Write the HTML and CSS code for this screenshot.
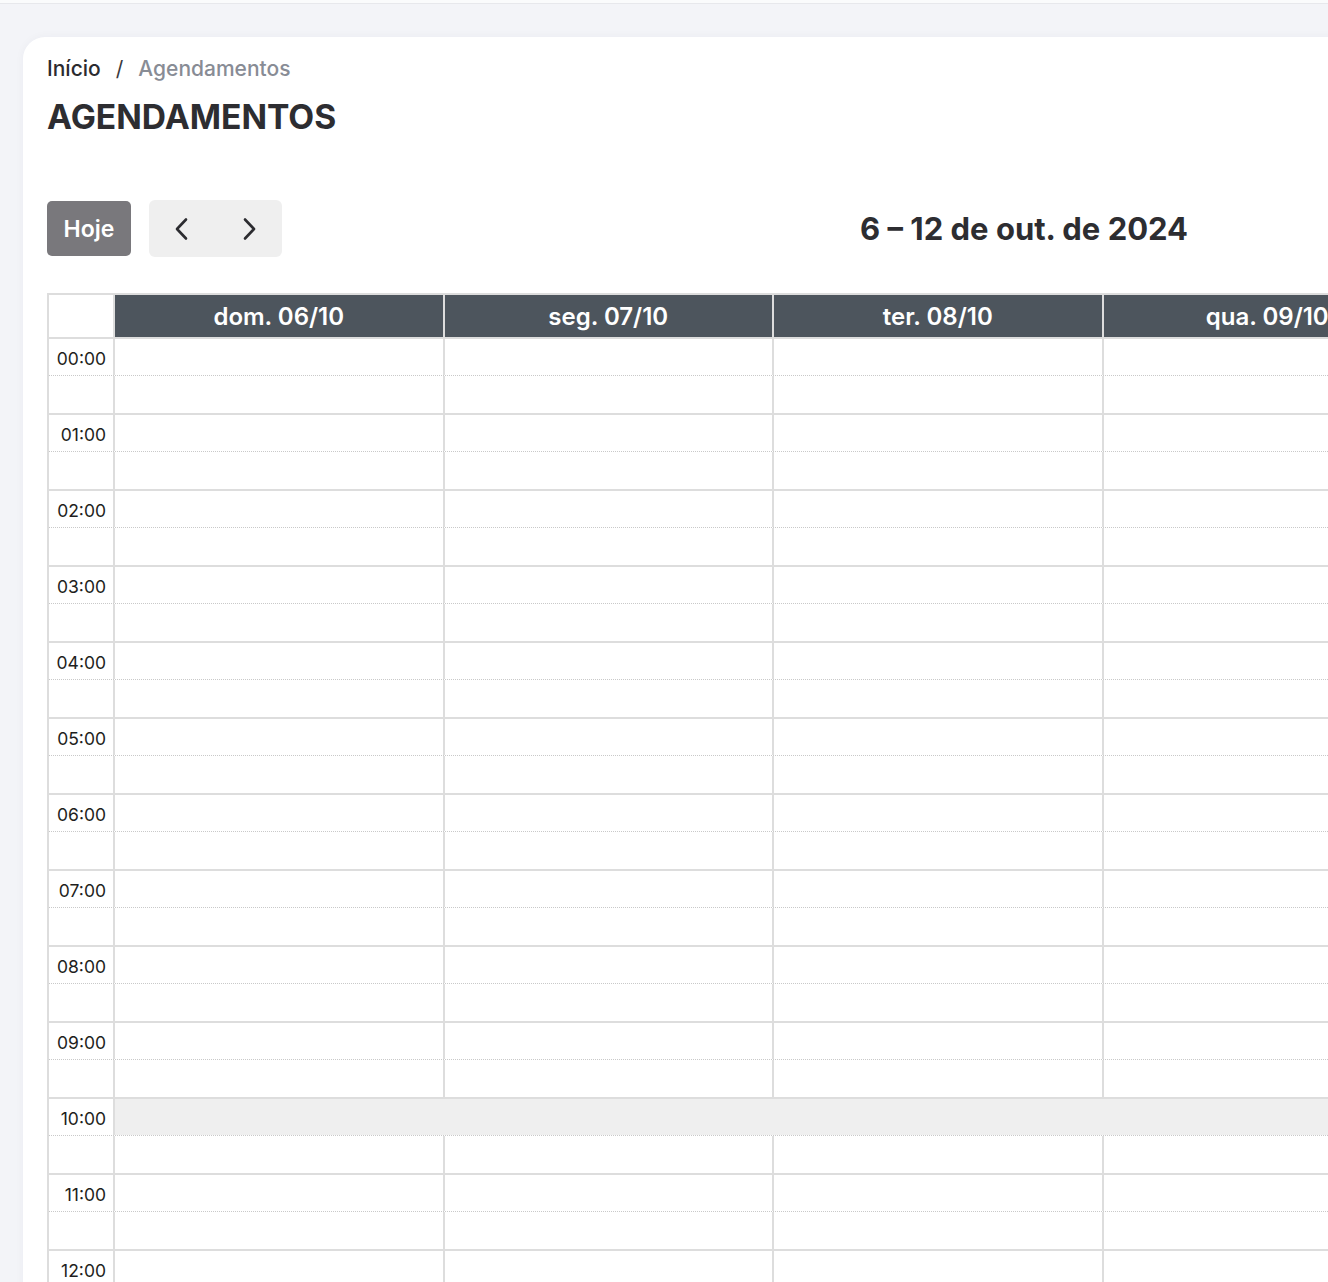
FILE: index.html
```html
<!DOCTYPE html>
<html lang="pt-BR">
<head>
<meta charset="utf-8">
<title>Agendamentos</title>
<link rel="stylesheet" href="styles.css">
</head>
<body>
<div class="topbar"></div>
<main class="main">
  <section class="card">
    <nav class="breadcrumb">
      <span class="crumb">Início</span>
      <span class="sep">/</span>
      <span class="crumb current">Agendamentos</span>
    </nav>
    <h1 class="page-title">AGENDAMENTOS</h1>

    <div class="toolbar">
      <div class="toolbar-left">
        <button class="btn-today">Hoje</button>
        <div class="nav-group">
          <button class="nav-btn" aria-label="Anterior">
            <svg width="20" height="26" viewBox="0 0 20 26"><path d="M14 3.5 L5 13 L14 22.5" fill="none" stroke="#2c2c30" stroke-width="2.6" stroke-linecap="round" stroke-linejoin="round"/></svg>
          </button>
          <button class="nav-btn" aria-label="Próximo">
            <svg width="20" height="26" viewBox="0 0 20 26"><path d="M6 3.5 L15 13 L6 22.5" fill="none" stroke="#2c2c30" stroke-width="2.6" stroke-linecap="round" stroke-linejoin="round"/></svg>
          </button>
        </div>
      </div>
      <h2 class="range-title">6 – 12 de out. de 2024</h2>
    </div>

    <div class="cal">
      <div class="cal-head">
        <div class="axis-head"></div>
        <div class="day-head">dom. 06/10</div>
        <div class="day-head">seg. 07/10</div>
        <div class="day-head">ter. 08/10</div>
        <div class="day-head">qua. 09/10</div>
        <div class="day-head">qui. 10/10</div>
        <div class="day-head">sex. 11/10</div>
        <div class="day-head">sáb. 12/10</div>
      </div>

      <div class="slot hour"><div class="time">00:00</div><div class="lane"></div><div class="lane"></div><div class="lane"></div><div class="lane"></div><div class="lane"></div><div class="lane"></div><div class="lane"></div></div>
      <div class="slot half"><div class="time"></div><div class="lane"></div><div class="lane"></div><div class="lane"></div><div class="lane"></div><div class="lane"></div><div class="lane"></div><div class="lane"></div></div>
      <div class="slot hour"><div class="time">01:00</div><div class="lane"></div><div class="lane"></div><div class="lane"></div><div class="lane"></div><div class="lane"></div><div class="lane"></div><div class="lane"></div></div>
      <div class="slot half"><div class="time"></div><div class="lane"></div><div class="lane"></div><div class="lane"></div><div class="lane"></div><div class="lane"></div><div class="lane"></div><div class="lane"></div></div>
      <div class="slot hour"><div class="time">02:00</div><div class="lane"></div><div class="lane"></div><div class="lane"></div><div class="lane"></div><div class="lane"></div><div class="lane"></div><div class="lane"></div></div>
      <div class="slot half"><div class="time"></div><div class="lane"></div><div class="lane"></div><div class="lane"></div><div class="lane"></div><div class="lane"></div><div class="lane"></div><div class="lane"></div></div>
      <div class="slot hour"><div class="time">03:00</div><div class="lane"></div><div class="lane"></div><div class="lane"></div><div class="lane"></div><div class="lane"></div><div class="lane"></div><div class="lane"></div></div>
      <div class="slot half"><div class="time"></div><div class="lane"></div><div class="lane"></div><div class="lane"></div><div class="lane"></div><div class="lane"></div><div class="lane"></div><div class="lane"></div></div>
      <div class="slot hour"><div class="time">04:00</div><div class="lane"></div><div class="lane"></div><div class="lane"></div><div class="lane"></div><div class="lane"></div><div class="lane"></div><div class="lane"></div></div>
      <div class="slot half"><div class="time"></div><div class="lane"></div><div class="lane"></div><div class="lane"></div><div class="lane"></div><div class="lane"></div><div class="lane"></div><div class="lane"></div></div>
      <div class="slot hour"><div class="time">05:00</div><div class="lane"></div><div class="lane"></div><div class="lane"></div><div class="lane"></div><div class="lane"></div><div class="lane"></div><div class="lane"></div></div>
      <div class="slot half"><div class="time"></div><div class="lane"></div><div class="lane"></div><div class="lane"></div><div class="lane"></div><div class="lane"></div><div class="lane"></div><div class="lane"></div></div>
      <div class="slot hour"><div class="time">06:00</div><div class="lane"></div><div class="lane"></div><div class="lane"></div><div class="lane"></div><div class="lane"></div><div class="lane"></div><div class="lane"></div></div>
      <div class="slot half"><div class="time"></div><div class="lane"></div><div class="lane"></div><div class="lane"></div><div class="lane"></div><div class="lane"></div><div class="lane"></div><div class="lane"></div></div>
      <div class="slot hour"><div class="time">07:00</div><div class="lane"></div><div class="lane"></div><div class="lane"></div><div class="lane"></div><div class="lane"></div><div class="lane"></div><div class="lane"></div></div>
      <div class="slot half"><div class="time"></div><div class="lane"></div><div class="lane"></div><div class="lane"></div><div class="lane"></div><div class="lane"></div><div class="lane"></div><div class="lane"></div></div>
      <div class="slot hour"><div class="time">08:00</div><div class="lane"></div><div class="lane"></div><div class="lane"></div><div class="lane"></div><div class="lane"></div><div class="lane"></div><div class="lane"></div></div>
      <div class="slot half"><div class="time"></div><div class="lane"></div><div class="lane"></div><div class="lane"></div><div class="lane"></div><div class="lane"></div><div class="lane"></div><div class="lane"></div></div>
      <div class="slot hour"><div class="time">09:00</div><div class="lane"></div><div class="lane"></div><div class="lane"></div><div class="lane"></div><div class="lane"></div><div class="lane"></div><div class="lane"></div></div>
      <div class="slot half"><div class="time"></div><div class="lane"></div><div class="lane"></div><div class="lane"></div><div class="lane"></div><div class="lane"></div><div class="lane"></div><div class="lane"></div></div>
      <div class="slot hour"><div class="time">10:00</div><div class="lane lane-busy"></div></div>
      <div class="slot half"><div class="time"></div><div class="lane"></div><div class="lane"></div><div class="lane"></div><div class="lane"></div><div class="lane"></div><div class="lane"></div><div class="lane"></div></div>
      <div class="slot hour"><div class="time">11:00</div><div class="lane"></div><div class="lane"></div><div class="lane"></div><div class="lane"></div><div class="lane"></div><div class="lane"></div><div class="lane"></div></div>
      <div class="slot half"><div class="time"></div><div class="lane"></div><div class="lane"></div><div class="lane"></div><div class="lane"></div><div class="lane"></div><div class="lane"></div><div class="lane"></div></div>
      <div class="slot hour"><div class="time">12:00</div><div class="lane"></div><div class="lane"></div><div class="lane"></div><div class="lane"></div><div class="lane"></div><div class="lane"></div><div class="lane"></div></div>
      <div class="slot half"><div class="time"></div><div class="lane"></div><div class="lane"></div><div class="lane"></div><div class="lane"></div><div class="lane"></div><div class="lane"></div><div class="lane"></div></div>
      <div class="slot hour"><div class="time">13:00</div><div class="lane"></div><div class="lane"></div><div class="lane"></div><div class="lane"></div><div class="lane"></div><div class="lane"></div><div class="lane"></div></div>
      <div class="slot half"><div class="time"></div><div class="lane"></div><div class="lane"></div><div class="lane"></div><div class="lane"></div><div class="lane"></div><div class="lane"></div><div class="lane"></div></div>
    </div>
  </section>
</main>
</body>
</html>
```

FILE: styles.css
```css
html, body {
  margin: 0;
  padding: 0;
  overflow: hidden;
  background: #f3f4f8;
  font-family: Inter, "Noto Sans", "Liberation Sans", sans-serif;
  color: #2d2d31;
}

.topbar {
  height: 3px;
  background: #fafbfc;
  border-bottom: 1px solid #e7e8ec;
}

.main {
  padding: 33px 0 0 23px;
}

.card {
  width: 2430px;
  background: #ffffff;
  border-radius: 22px 0 0 0;
  padding: 20px 24px 40px 24px;
  box-shadow: 0 0 10px rgba(30, 40, 70, 0.04);
}

.breadcrumb {
  display: flex;
  align-items: center;
  font-size: 21px;
  line-height: 24px;
  font-weight: 500;
}

.crumb {
  color: #2b2b2f;
}

.crumb.current {
  color: #888c95;
}

.sep {
  color: #3a3a3e;
  font-weight: 400;
  margin: 0 15px;
}

.page-title {
  margin: 16px 0 0 0;
  font-size: 33.6px;
  line-height: 40px;
  font-weight: 700;
  color: #2d2d31;
  letter-spacing: 0;
}

.toolbar {
  display: flex;
  align-items: center;
  margin-top: 63px;
}

.toolbar-left {
  display: flex;
  align-items: center;
  gap: 18px;
}

.btn-today {
  width: 84px;
  height: 55px;
  padding: 0;
  border: none;
  border-radius: 5px;
  background: #79787c;
  color: #ffffff;
  font-family: Inter, "Noto Sans", sans-serif;
  font-size: 23px;
  font-weight: 600;
}

.nav-group {
  display: flex;
  height: 57px;
  background: #efefef;
  border-radius: 6px;
}

.nav-btn {
  width: 66.5px;
  height: 57px;
  border: none;
  background: transparent;
  display: flex;
  align-items: center;
  justify-content: center;
  padding: 0;
}

.range-title {
  margin: 0 0 0 578px;
  font-size: 31px;
  line-height: 36px;
  font-weight: 700;
  color: #2d2d31;
}

.cal {
  margin-top: 36px;
  width: 2374.5px;
  border-top: 2px solid #dddddd;
  border-left: 2px solid #dddddd;
}

.cal-head,
.slot {
  display: grid;
  grid-template-columns: 66px repeat(7, 329.5px);
}

.cal-head {
  height: 42px;
}

.axis-head {
  border-right: 2px solid #dddddd;
  background: #ffffff;
}

.day-head {
  background: #4d555d;
  border-right: 2px solid #dddddd;
  color: #ffffff;
  font-size: 24px;
  font-weight: 600;
  display: flex;
  align-items: center;
  justify-content: center;
}

.slot {
  height: 38px;
  box-sizing: border-box;
}

.slot.hour {
  border-top: 2px solid #dddddd;
}

.slot.half {
  border-top: 1px dotted #c9c9c9;
}

.time {
  border-right: 2px solid #dddddd;
  text-align: right;
  padding: 9px 7px 0 0;
  font-size: 17.5px;
  line-height: 22px;
  font-weight: 400;
  color: #1e1e20;
  box-sizing: border-box;
}

.lane {
  border-right: 2px solid #dddddd;
}

.lane-busy {
  grid-column: span 7;
  background: #efefef;
}
```
